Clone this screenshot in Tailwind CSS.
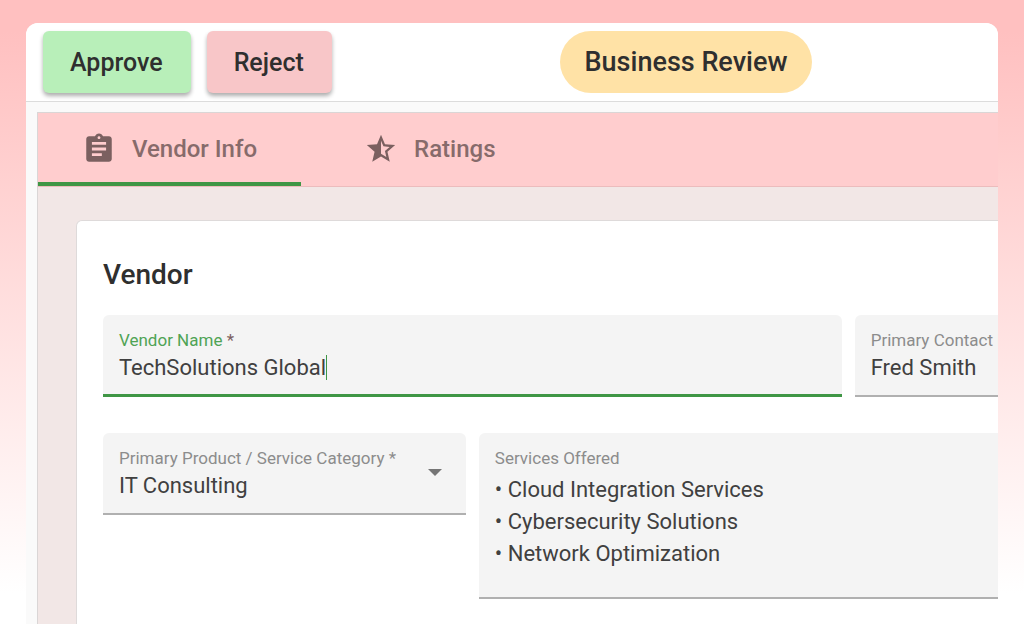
<!DOCTYPE html>
<html lang="en">
<head>
<meta charset="utf-8">
<meta name="viewport" content="width=device-width, initial-scale=1">
<title>Vendor review</title>
<script src="https://cdn.jsdelivr.net/npm/@tailwindcss/browser@4"></script>
</head>
<body class="flex h-screen flex-col overflow-hidden bg-linear-to-b from-[#ffc0c0] from-5% to-white to-95% px-[26px] pt-[23px] font-[Roboto,sans-serif] text-[#2f2f2f]">
<main class="flex flex-1 flex-col overflow-hidden rounded-t-xl bg-[#fafafa]">
  <header class="grid shrink-0 grid-cols-[1fr_auto_1fr] items-center border-b border-[#dcdcdc] bg-white px-[17px] py-2">
    <div class="col-start-1 row-start-1 flex gap-4">
      <button type="button" class="rounded-md bg-[#b8efb9] pt-[17px] pr-7 pb-[15px] pl-[27px] text-[25px] leading-[30px] font-medium shadow-[0_3px_4px_rgba(0,0,0,0.32)]">Approve</button>
      <button type="button" class="rounded-md bg-[#f8c6c8] pt-[17px] pr-7 pb-[15px] pl-[27px] text-[25px] leading-[30px] font-medium shadow-[0_3px_4px_rgba(0,0,0,0.32)]">Reject</button>
    </div>
    <div class="col-span-3 col-start-1 row-start-1 ml-[348px] justify-self-center rounded-full bg-[#ffe2a6] px-[25px] py-4 text-[27px] leading-[30px] font-medium">Business Review</div>
  </header>

  <section class="mt-2.5 ml-[11px] flex flex-1 flex-col border-t border-l border-[#dad6d6] bg-[#f2e7e6]">
    <nav class="flex shrink-0 border-b border-[#ecbcbd] bg-[#ffcdce] text-[24px] leading-[30px] font-medium text-[#876b6b]" role="tablist">
      <button type="button" role="tab" aria-selected="true" class="flex items-center gap-4 border-b-4 border-[#3f9645] pt-[19px] pr-11 pb-4 pl-11">
        <svg class="size-[34px] fill-[#7b6060]" viewBox="0 0 24 24" aria-hidden="true"><path d="M19 3h-4.180C14.400 1.840 13.300 1 12 1s-2.400.84-2.820 2H5c-1.100 0-2 .9-2 2v14c0 1.100.9 2 2 2h14c1.100 0 2-.9 2-2V5c0-1.100-.9-2-2-2zm-7 0c.55 0 1 .45 1 1s-.45 1-1 1-1-.45-1-1 .45-1 1-1zm2 14H7v-2h7v2zm3-4H7v-2h10v2zm0-4H7V7h10v2z"/></svg>
        Vendor Info
      </button>
      <button type="button" role="tab" aria-selected="false" class="flex items-center gap-4 border-b-4 border-transparent pt-[19px] pr-16 pb-4 pl-[63px]">
        <svg class="size-[34px] fill-[#7b6060]" viewBox="0 0 24 24" aria-hidden="true"><path d="M22 9.240l-7.190-.62L12 2 9.190 8.630 2 9.240l5.460 4.730L5.820 21 12 17.270 18.180 21l-1.630-7.030L22 9.240zM12 15.400V6.100l1.710 4.040 4.380.38-3.320 2.880 1 4.280L12 15.400z"/></svg>
        Ratings
      </button>
    </nav>

    <div class="flex w-[169%] flex-1 flex-col px-[38px] pt-[33px]">
      <form class="flex-1 rounded-t-md border border-b-0 border-[#dedada] bg-white pt-9 pr-7 pl-[26px]">
        <h1 class="text-[28px] leading-9 font-medium">Vendor</h1>
        <div class="mt-[22px] grid grid-cols-4 items-start gap-x-[13px] gap-y-9">
          <div class="col-span-2 h-[82px] rounded-t-md border-b-3 border-[#3f9645] bg-[#f4f4f4] px-4 pt-3.5">
            <label for="vendor" class="block text-[17px] leading-[22px] text-[#4fa355]">Vendor Name <span class="text-[#7b6060]">*</span></label>
            <div class="flex items-center">
              <input id="vendor" type="text" value="TechSolutions Global" class="field-sizing-content h-8 text-[22px] text-[#404040] outline-none">
              <span class="h-[25px] w-px bg-[#3f9645]" aria-hidden="true"></span>
            </div>
          </div>
          <div class="col-span-2 h-[82px] rounded-t-md border-b-2 border-[#b0b0b0] bg-[#f4f4f4] px-4 pt-3.5">
            <label for="contact" class="block text-[17px] leading-[22px] text-[#8c8c8c]">Primary Contact Name</label>
            <input id="contact" type="text" value="Fred Smith" class="block h-8 w-full text-[22px] text-[#404040] outline-none">
          </div>
          <div class="relative h-[82px] rounded-t-md border-b-2 border-[#b0b0b0] bg-[#f4f4f4] px-4 pt-3.5">
            <label for="category" class="block text-[17px] leading-[22px] text-[#8c8c8c]">Primary Product / Service Category *</label>
            <select id="category" class="block h-8 w-full appearance-none text-[22px] text-[#404040] outline-none"><option>IT Consulting</option></select>
            <svg class="pointer-events-none absolute top-9 right-6 h-[7px] w-3.5 fill-[#757575]" viewBox="0 0 14 7" aria-hidden="true"><path d="M0 0h14L7 7z"/></svg>
          </div>
          <div class="col-span-2 rounded-t-md border-b-2 border-[#b0b0b0] bg-[#f4f4f4] px-4 pt-3.5 pb-[15px]">
            <label for="services" class="block text-[17px] leading-[22px] text-[#8c8c8c]">Services Offered</label>
            <textarea id="services" class="mt-[5px] block h-[108px] w-full resize-none overflow-hidden text-[22px] leading-8 text-[#404040] outline-none">• Cloud Integration Services
• Cybersecurity Solutions
• Network Optimization</textarea>
          </div>
        </div>
      </form>
    </div>
  </section>
</main>
</body>
</html>
